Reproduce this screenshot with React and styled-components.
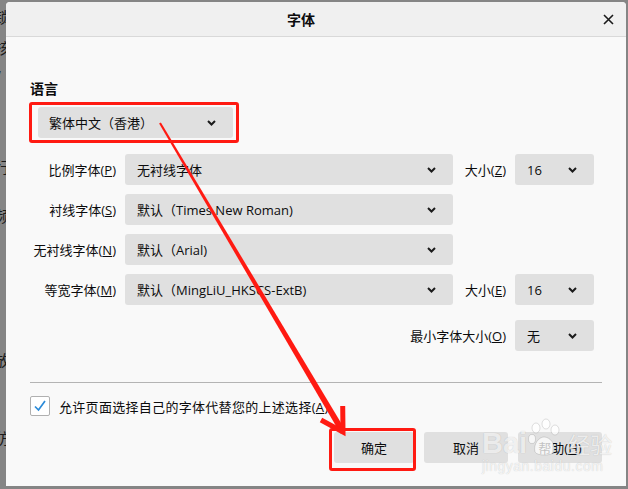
import React from 'react';
import styled, { createGlobalStyle } from 'styled-components';

const GlobalStyle = createGlobalStyle`
  html, body {
    margin: 0;
    padding: 0;
  }
  body {
    font-family: "Open Sans", "Noto Sans CJK SC", sans-serif;
    color: #0c0c0d;
  }
`;

// page + the window behind the dialog
const Page = styled.div`
  position: relative;
  width: 628px;
  height: 489px;
  display: flex;
  background: #858585;
  overflow: hidden;
`;

const BehindStrip = styled.div`
  width: 6px;
  overflow: hidden;
  display: flex;
  flex-direction: column;
  font-family: "Noto Sans CJK SC", sans-serif;
  font-size: 15px;
  color: #1a1a1a;
`;

const BehindGlyph = styled.div`
  height: ${(p) => p.$h}px;
  line-height: ${(p) => p.$h}px;
  margin-left: -5px;
  white-space: nowrap;
`;

const Dialog = styled.div`
  width: 620px;
  margin: 2px 2px 3px 0;
  display: flex;
  flex-direction: column;
  background: #f9f9f9;
  border-radius: 4px 4px 0 0;
  overflow: hidden;
`;

const TitleBar = styled.div`
  height: 34px;
  display: flex;
  align-items: center;
  background: #f0f0f0;
  border-bottom: 1px solid #d9d9d9;
`;

const TitleText = styled.div`
  flex: 1;
  text-align: center;
  font-size: 14px;
  font-weight: 700;
  font-family: "Noto Sans CJK SC", sans-serif;
`;

const CloseButton = styled.div`
  width: 24px;
  height: 24px;
  margin-right: 6px;
  display: flex;
  align-items: center;
  justify-content: center;
`;

const Body = styled.div`
  flex: 1;
  padding: 0 24px;
  display: flex;
  flex-direction: column;
`;

const Heading = styled.div`
  margin-top: 41px;
  font-size: 14px;
  line-height: 20px;
  font-weight: 700;
  font-family: "Noto Sans CJK SC", sans-serif;
`;

const Select = styled.div`
  width: ${(p) => p.$w}px;
  height: 31px;
  box-sizing: border-box;
  display: flex;
  align-items: center;
  justify-content: space-between;
  padding: 0 17px 0 ${(p) => p.$pl || 12}px;
  background: #e0e0e0;
  border-radius: 3px;
  font-size: 13px;
  white-space: nowrap;
`;

const LangSelect = styled(Select)`
  margin: 9px 0 0 8px;
`;

const FontGrid = styled.div`
  margin-top: 16px;
  display: grid;
  grid-template-columns: 86px 328px 44px 79px;
  grid-template-rows: 31px 31px 31px 31px 37px;
  column-gap: 9px;
  row-gap: 9px;
`;

const Label = styled.div`
  grid-column: ${(p) => p.$col || 'auto'};
  display: flex;
  align-items: center;
  justify-content: flex-end;
  font-size: 13px;
  white-space: nowrap;
  margin-top: ${(p) => (p.$last ? 6 : 0)}px;
`;

const Cell = styled.div`
  grid-column: ${(p) => p.$col || 'auto'};
  margin-top: ${(p) => (p.$last ? 6 : 0)}px;
`;

const Separator = styled.div`
  margin-top: 31px;
  height: 1px;
  background: #b4b4b4;
`;

const CheckRow = styled.div`
  margin-top: 13px;
  height: 20px;
  display: flex;
  align-items: center;
  gap: 9px;
  font-size: 13px;
  letter-spacing: 0.3px;
`;

const CheckBox = styled.div`
  width: 20px;
  height: 20px;
  box-sizing: border-box;
  border: 1px solid #b0b0b0;
  border-radius: 2px;
  background: #ffffff;
  display: flex;
  align-items: center;
  justify-content: center;
`;

const ButtonRow = styled.div`
  margin-top: 16px;
  display: flex;
  justify-content: flex-end;
  gap: 10px;
`;

const Button = styled.div`
  width: ${(p) => p.$w}px;
  height: 31px;
  display: flex;
  align-items: center;
  justify-content: center;
  background: #e0e0e0;
  border-radius: 3px;
  font-size: 13px;
`;

// annotation overlays (red frames, arrow, watermark)
const RedFrame = styled.div`
  position: absolute;
  left: ${(p) => p.$x}px;
  top: ${(p) => p.$y}px;
  width: ${(p) => p.$w}px;
  height: ${(p) => p.$h}px;
  box-sizing: border-box;
  border: 3.5px solid #ff1a12;
  border-radius: 3px;
  pointer-events: none;
`;

const Overlay = styled.svg`
  position: absolute;
  left: 0;
  top: 0;
  pointer-events: none;
`;

const Watermark = styled.div`
  position: absolute;
  left: 482px;
  top: 414px;
  display: flex;
  flex-direction: column;
  align-items: flex-start;
  pointer-events: none;
  color: rgba(255, 255, 255, 0.75);
  text-shadow: 0 0 1px rgba(0, 0, 0, 0.22);
`;

const MarkTop = styled.div`
  display: flex;
  align-items: flex-end;
  height: 44px;
`;

const MarkWord = styled.span`
  font-family: "Liberation Sans", sans-serif;
  font-weight: 700;
  font-size: 29px;
  line-height: 30px;
`;

const MarkCjk = styled.span`
  font-family: "Noto Sans CJK SC", sans-serif;
  font-size: 22px;
  line-height: 30px;
  margin-left: 7px;
`;

const MarkUrl = styled.span`
  font-family: "Liberation Sans", sans-serif;
  font-size: 14px;
  line-height: 16px;
  letter-spacing: 0.5px;
`;

const Chevron = () => (
  <svg width="9" height="6" viewBox="0 0 9 6">
    <path d="M1 1 L4.5 4.5 L8 1" fill="none" stroke="#1b1b1b" strokeWidth="2" />
  </svg>
);

const behind = [
  ['锁', 34], ['核', 28], ['/', 30], ['', 25], ['', 35], ['行', 30], ['', 18], ['频', 32],
  ['(', 38], ['', 70], ['放', 40], ['(', 30], ['', 10], ['仿', 36],
];

const rows = [
  { label: '比例字体', key: 'P', value: '无衬线字体', size: { label: '大小', key: 'Z', value: '16' } },
  { label: '衬线字体', key: 'S', value: '默认（Times New Roman)' },
  { label: '无衬线字体', key: 'N', value: '默认（Arial)' },
  { label: '等宽字体', key: 'M', value: '默认（MingLiU_HKSCS-ExtB)', size: { label: '大小', key: 'E', value: '16' } },
];

export default function App() {
  return (
    <Page>
      <GlobalStyle />
      <BehindStrip>
        {behind.map(([ch, h], i) => (
          <BehindGlyph key={i} $h={h}>{ch}</BehindGlyph>
        ))}
      </BehindStrip>

      <Dialog>
        <TitleBar>
          <TitleText>字体</TitleText>
          <CloseButton>
            <svg width="11" height="11" viewBox="0 0 11 11">
              <path d="M1 1 L10 10 M10 1 L1 10" stroke="#1b1b1b" strokeWidth="1.6" />
            </svg>
          </CloseButton>
        </TitleBar>

        <Body>
          <Heading>语言</Heading>
          <LangSelect $w={195} $pl={11}>
            <span>繁体中文（香港）</span>
            <Chevron />
          </LangSelect>

          <FontGrid>
            {rows.map((r) => (
              <React.Fragment key={r.key}>
                <Label>
                  {r.label}(<u>{r.key}</u>)
                </Label>
                <Cell>
                  <Select $w={328}>
                    <span>{r.value}</span>
                    <Chevron />
                  </Select>
                </Cell>
                {r.size && (
                  <>
                    <Label>
                      {r.size.label}(<u>{r.size.key}</u>)
                    </Label>
                    <Cell>
                      <Select $w={79}>
                        <span>{r.size.value}</span>
                        <Chevron />
                      </Select>
                    </Cell>
                  </>
                )}
                {!r.size && <Cell $col="3 / 5" />}
              </React.Fragment>
            ))}
            <Label $col="1 / 4" $last>
              最小字体大小(<u>O</u>)
            </Label>
            <Cell $col="4" $last>
              <Select $w={79}>
                <span>无</span>
                <Chevron />
              </Select>
            </Cell>
          </FontGrid>

          <Separator />

          <CheckRow>
            <CheckBox>
              <svg width="14" height="14" viewBox="0 0 14 14">
                <path d="M2 7.5 L5.5 11 L12 2" fill="none" stroke="#2a8ad8" strokeWidth="1.7" />
              </svg>
            </CheckBox>
            <span>
              允许页面选择自己的字体代替您的上述选择(<u>A</u>)
            </span>
          </CheckRow>

          <ButtonRow>
            <Button $w={80}>确定</Button>
            <Button $w={84}>取消</Button>
            <Button $w={84}>
              帮助(<u>H</u>)
            </Button>
          </ButtonRow>
        </Body>
      </Dialog>

      <RedFrame $x={29} $y={102} $w={210} $h={41} />
      <RedFrame $x={329} $y={428} $w={87} $h={43} />

      <Watermark>
        <MarkTop>
          <MarkWord>Bai</MarkWord>
          <svg width="34" height="40" viewBox="0 0 34 40">
            <g fill="rgba(255,255,255,0.75)" stroke="rgba(0,0,0,0.12)" strokeWidth="1">
              <ellipse cx="9" cy="10" rx="4" ry="5" />
              <ellipse cx="19" cy="6" rx="4" ry="5" />
              <ellipse cx="28" cy="12" rx="4" ry="5" />
              <ellipse cx="5" cy="21" rx="3.5" ry="4.5" />
              <path d="M8 34 C6 26 12 19 17 19 C23 19 29 26 27 34 C25 38 10 38 8 34 Z" />
            </g>
          </svg>
          <MarkCjk>经验</MarkCjk>
        </MarkTop>
        <MarkUrl>jingyan.baidu.com</MarkUrl>
      </Watermark>

      <Overlay width="628" height="489" viewBox="0 0 628 489">
        <polygon points="159.1,123.5 160.9,122.5 345.6,430.5 340.4,433.5" fill="#ff1a12" />
        <path
          d="M342.7 406 L343 432 L321 420"
          fill="none"
          stroke="#ff1a12"
          strokeWidth="5"
          strokeLinejoin="miter"
        />
      </Overlay>
    </Page>
  );
}
